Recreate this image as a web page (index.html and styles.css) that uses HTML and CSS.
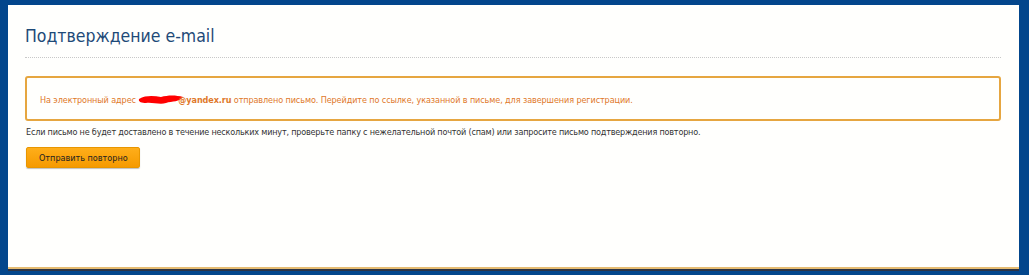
FILE: index.html
```html
<!DOCTYPE html>
<html lang="ru">
<head>
  <meta charset="UTF-8" />
  <title>Подтверждение e-mail</title>
  <link rel="stylesheet" href="styles.css">
</head>
<body>
  <div class="panel">
    <h1 class="title">Подтверждение e-mail</h1>

    <div class="notice">
      На электронный адрес
      <span class="hidden-mail"><svg width="46" height="14" viewBox="0 0 46 14"><path d="M1 7 C8 3, 16 4, 23 5 C30 3, 38 3, 45 5 C42 10, 34 9, 28 11 C22 13, 14 10, 8 11 C4 11, 0 10, 1 7 Z" fill="#f00"/></svg></span><b>@yandex.ru</b>
      отправлено письмо. Перейдите по ссылке, указанной в письме, для завершения регистрации.
    </div>

    <p class="hint">Если письмо не будет доставлено в течение нескольких минут, проверьте папку с нежелательной почтой (спам) или запросите письмо подтверждения повторно.</p>

    <button class="resend" type="button">Отправить повторно</button>
  </div>
</body>
</html>
```

FILE: styles.css
```css
/* Page */
body {
  margin: 0;
  background: #03468c;
  font-family: "DejaVu Sans Condensed", "DejaVu Sans", Verdana, sans-serif;
  height: 275px;
}
/* White panel with gold bottom edge */
.panel {
  margin: 5px 10px 0 8px;
  height: 264px;
  box-sizing: border-box;
  background: #fffffd;
  border-bottom: 2px solid #e6bc72;
  box-shadow: 0 2px 0 #2c3446;
  padding: 21px 18px 0 17px;
}
.title {
  margin: 0;
  font-weight: normal;
  font-size: 17.5px;
  color: #1e4a78;
  padding-bottom: 11px;
  border-bottom: 1px dotted #c8c8c8;
}
.notice {
  margin-top: 18px;
  border: 2px solid #e6a640;
  border-radius: 3px;
  padding: 14px 13px 13px;
  font-size: 9px;
  letter-spacing: -0.1px;
  color: #e0782a;
  line-height: 12px;
}
.hidden-mail svg {
  vertical-align: -3px;
  margin-right: -6px;
}
.hint {
  margin: 5px 0 0 1px;
  font-size: 9px;
  letter-spacing: -0.2px;
  color: #333;
  line-height: 12px;
}
.resend {
  margin: 9px 0 0 1px;
  height: 21px;
  padding: 0 11px 0 12px;
  font-family: inherit;
  font-size: 9px;
  color: #222;
  border: 1px solid #e89600;
  border-radius: 2px;
  background: linear-gradient(#ffae1a, #f59a00);
  box-shadow: 0 1px 1px rgba(0,0,0,0.25);
}
```
